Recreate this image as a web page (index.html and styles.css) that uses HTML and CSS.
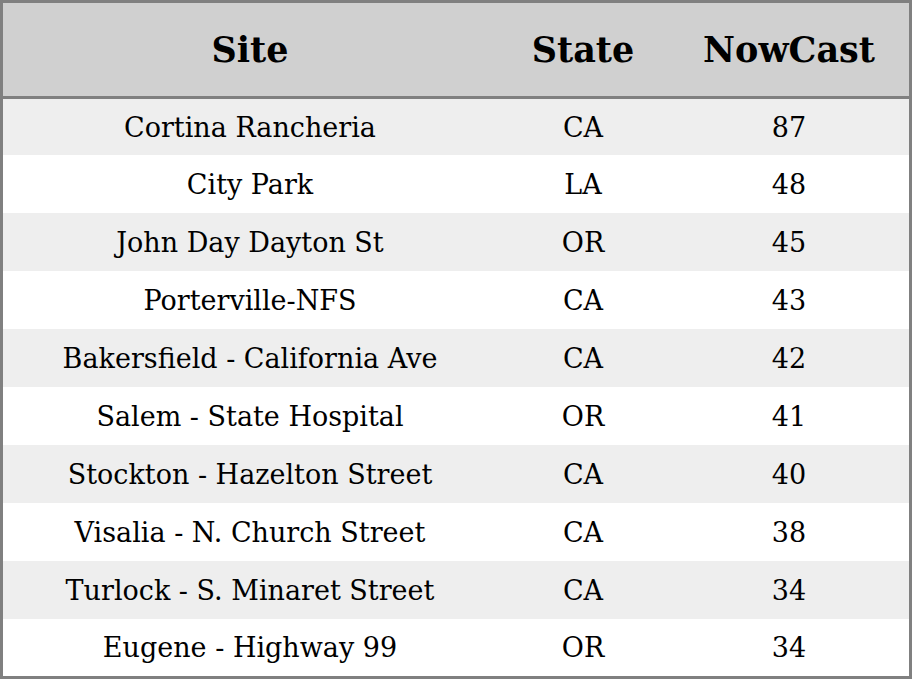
FILE: index.html
```html
<!DOCTYPE html>
<html>
<head>
<meta charset="utf-8">
<link rel="stylesheet" href="styles.css">
</head>
<body>
<div class="table">
  <div class="row head">
    <div class="cell">Site</div>
    <div class="cell">State</div>
    <div class="cell">NowCast</div>
  </div>
  <div class="body">
    <div class="row odd"><div class="cell">Cortina Rancheria</div><div class="cell">CA</div><div class="cell">87</div></div>
    <div class="row"><div class="cell">City Park</div><div class="cell">LA</div><div class="cell">48</div></div>
    <div class="row odd"><div class="cell">John Day Dayton St</div><div class="cell">OR</div><div class="cell">45</div></div>
    <div class="row"><div class="cell">Porterville-NFS</div><div class="cell">CA</div><div class="cell">43</div></div>
    <div class="row odd"><div class="cell">Bakersfield - California Ave</div><div class="cell">CA</div><div class="cell">42</div></div>
    <div class="row"><div class="cell">Salem - State Hospital</div><div class="cell">OR</div><div class="cell">41</div></div>
    <div class="row odd"><div class="cell">Stockton - Hazelton Street</div><div class="cell">CA</div><div class="cell">40</div></div>
    <div class="row"><div class="cell">Visalia - N. Church Street</div><div class="cell">CA</div><div class="cell">38</div></div>
    <div class="row odd"><div class="cell">Turlock - S. Minaret Street</div><div class="cell">CA</div><div class="cell">34</div></div>
    <div class="row"><div class="cell">Eugene - Highway 99</div><div class="cell">OR</div><div class="cell">34</div></div>
  </div>
</div>
</body>
</html>
```
FILE: styles.css
```css
html, body {
  margin: 0;
  padding: 0;
  background: #ffffff;
}
.table {
  box-sizing: border-box;
  width: 912px;
  height: 679px;
  border: 3px solid #808080;
  display: flex;
  flex-direction: column;
  font-family: "DejaVu Serif", serif;
  color: #000;
}
.row {
  display: grid;
  grid-template-columns: 494px 172px 240px;
  align-items: center;
  background: #ffffff;
}
.row.odd {
  background: #eeeeee;
}
.cell {
  text-align: center;
}
.head {
  height: 93px;
  flex: none;
  background: #d0d0d0;
  border-bottom: 3px solid #808080;
  font-weight: bold;
  font-size: 35px;
}
.body {
  flex: 1;
  display: grid;
  grid-template-rows: 56px repeat(8, 58px) 57px;
  font-size: 27px;
}
```
